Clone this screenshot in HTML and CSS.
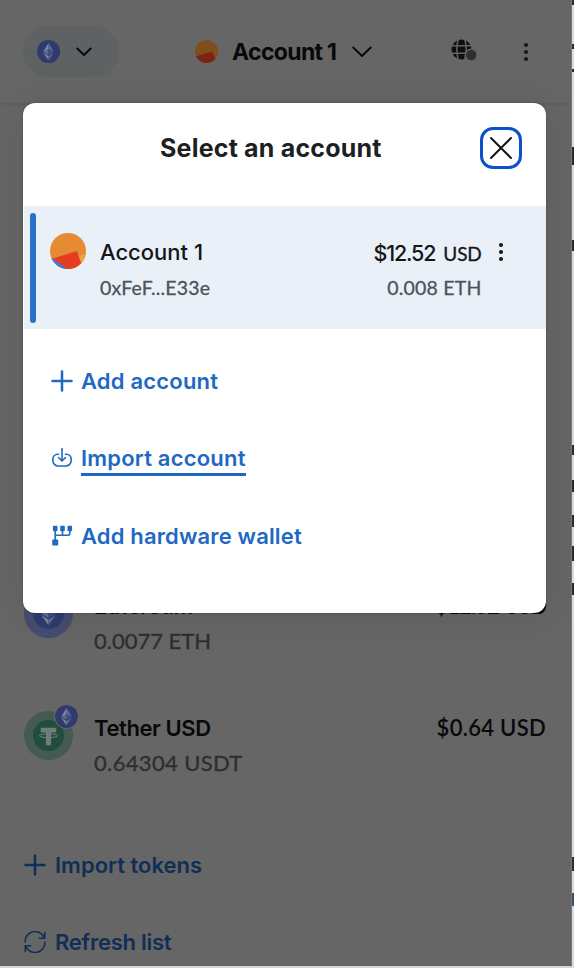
FILE: index.html
```
<!DOCTYPE html>
<html lang="en">
<head>
<meta charset="utf-8">
<title>Select an account</title>
<link rel="stylesheet" href="styles.css">
</head>
<body>
<svg class="defs" aria-hidden="true">
  <symbol id="eth" viewBox="0 0 32 32">
    <circle cx="16" cy="16" r="16" fill="#2f3b70"/>
    <path d="M16 4 8.6 16.3 16 13z" fill="#7c86a2"/>
    <path d="M16 4v9l7.4 3.3z" fill="#606b90"/>
    <path d="M8.6 16.3 16 20.7V13z" fill="#606b90"/>
    <path d="M23.4 16.3 16 20.7V13z" fill="#454f7a"/>
    <path d="M8.6 17.9 16 28v-5.8z" fill="#7c86a2"/>
    <path d="M23.4 17.9 16 28v-5.8z" fill="#606b90"/>
  </symbol>
</svg>
<div class="popup">
  <header class="topbar">
    <div class="network">
      <svg class="network-logo"><use href="#eth"/></svg>
      <svg class="network-arrow" viewBox="0 0 16 10"><path d="M1.3 1.5 8 8l6.700-6.500"/></svg>
    </div>
    <div class="current">
      <svg class="avatar-small" viewBox="0 0 36 36"><circle cx="18" cy="18" r="18" fill="#804d1e"/><path d="M1.500 25.300 27 18l4.500 11.800A18 18 0 0 1 1.500 25.300z" fill="#802213"/><path d="M1.500 25.300Q5 32 12 35z" fill="#1f467c"/></svg>
      <span class="current-name">Account 1</span>
      <svg class="current-arrow" viewBox="0 0 20 12"><path d="M1.300 1.500 10 10l8.700-8.500"/></svg>
    </div>
    <svg class="globe" viewBox="0 0 26 22">
      <circle cx="10.500" cy="10.500" r="10" fill="#0e0f11"/>
      <path d="M0 6.800h21M0 14.200h21M7.300 0Q4.300 10 7.300 21M13.700 0q3 10 0 21" fill="none" stroke="#646464" stroke-width="1.500"/>
      <circle cx="20.200" cy="16" r="6.600" fill="#646464"/><circle cx="20.200" cy="16" r="5.200" fill="#2d2f32"/>
    </svg>
    <svg class="dots" viewBox="0 0 6 20"><circle cx="3" cy="3" r="2"/><circle cx="3" cy="10" r="2"/><circle cx="3" cy="17" r="2"/></svg>
  </header>
  <main class="tokens">
    <div class="token">
      <div class="token-logo eth-ring"><svg class="token-mark"><use href="#eth"/></svg></div>
      <div class="token-main"><span class="token-name eth-name">Ethereum</span><span class="token-balance">0.0077 ETH</span></div>
      <span class="token-value eth-value">$12.52 USD</span>
    </div>
    <div class="token">
      <div class="token-logo usdt-ring">
        <svg class="token-mark" viewBox="0 0 32 32"><circle cx="16" cy="16" r="16" fill="#1f4f3c"/><path d="M8 8h16v5h-5.300v13h-5.400V13H8z" fill="#727c78"/><ellipse cx="16" cy="16.200" rx="9.500" ry="2" fill="none" stroke="#727c78" stroke-width="1"/></svg>
        <svg class="badge"><use href="#eth"/></svg>
      </div>
      <div class="token-main"><span class="token-name">Tether USD</span><span class="token-balance usdt-balance">0.64304 USDT</span></div>
      <span class="token-value">$0.64 USD</span>
    </div>
    <div class="page-link"><svg viewBox="0 0 22 22"><path class="heavy" d="M11 1.500v19M1.500 11h19"/></svg><span>Import tokens</span></div>
    <div class="page-link"><svg viewBox="0 0 22 22"><path d="M1.200 11A9.800 9.800 0 0 1 20 6.500M20.700 1.500v5.700h-5.400M20.800 11A9.800 9.800 0 0 1 2 15.500M1.300 20.500v-5.700h5.400"/></svg><span class="refresh">Refresh list</span></div>
  </main>
</div>
<aside class="behind"><span class="f1"></span><span class="f2"></span><span class="f3"></span><span class="f4"></span><span class="f5"></span><span class="f6"></span><span class="f7"></span><span class="f8"></span><span class="f9"></span><span class="f10"></span><span class="f11"></span><span class="f12"></span></aside>
<section class="modal">
  <header class="modal-head">
    <h1>Select an account</h1>
    <button class="close" aria-label="Close"><svg viewBox="0 0 24 24"><path d="m2 2 20 20M22 2 2 22"/></svg></button>
  </header>
  <div class="account">
    <i class="marker"></i>
    <svg class="avatar" viewBox="0 0 36 36"><defs><clipPath id="disc"><circle cx="18" cy="18" r="18"/></clipPath></defs><g clip-path="url(#disc)"><path fill="#e68a33" d="M0 0h36v36H0z"/><path d="m28.500 23.500 7.500-2.500v15h-8z" fill="#e9a73c"/><path d="M2 25.800 27 18l4.200 12.500L26 36H8z" fill="#e63c22"/><path d="M0 25.500h2.500L17 36H0z" fill="#2f80e5"/></g></svg>
    <div class="account-main"><span class="name">Account 1</span><span class="address">0xFeF...E33e</span></div>
    <div class="account-values"><span class="fiat">$12.52<small>USD</small></span><span class="crypto">0.008 ETH</span></div>
    <svg class="dots" viewBox="0 0 6 20"><circle cx="3" cy="3" r="2"/><circle cx="3" cy="10" r="2"/><circle cx="3" cy="17" r="2"/></svg>
  </div>
  <nav class="actions">
    <a><svg viewBox="0 0 22 22"><path class="heavy" d="M11 1.500v19M1.500 11h19"/></svg><span>Add account</span></a>
    <a><svg viewBox="0 0 22 22"><path d="M11 1.500v12.300M7.500 10.500l3.500 3.500 3.500-3.500M7.500 7.200H6.800A5 5 0 0 0 1.800 12v1.500a5.500 5.500 0 0 0 5.500 5.500h7.400a5.500 5.500 0 0 0 5.500-5.500V12a5 5 0 0 0-5-4.800h-.7"/></svg><span class="underlined">Import account</span></a>
    <a><svg viewBox="0 0 22 22"><path d="M4.200 4v13M4.200 10.300h12.600a2 2 0 0 0 2-2V4M11.500 4v6"/><path class="solid" d="M2.700 1.500h3v4h-3zM10 1.500h3v4h-3zM17.300 1.500h3v4h-3zM2 15.300h4.400v4.400H2z"/></svg><span class="hardware">Add hardware wallet</span></a>
  </nav>
</section>
</body>
</html>
```
FILE: styles.css
```
* { box-sizing: border-box; }
body {
  margin: 0;
  width: 574px;
  height: 968px;
  position: relative;
  overflow: hidden;
  background: #d3d4d6;
  font-family: Inter, "Liberation Sans", sans-serif;
  color: #141618;
}
.defs { position: absolute; width: 0; height: 0; }
svg { display: block; flex: none; }
span { white-space: nowrap; }

.popup {
  width: 572px;
  height: 966px;
  background: #666;
  border-right: 1px solid #777;
  overflow: hidden;
  color: #08090a;
}
.topbar {
  height: 103px;
  padding-left: 23px;
  display: flex;
  align-items: center;
  box-shadow: 0 0 5px rgba(0, 0, 0, .18);
}
.network {
  width: 96px;
  height: 51px;
  border-radius: 26px;
  background: #5f6263;
  padding-left: 14px;
  display: flex;
  align-items: center;
  gap: 16px;
}
.network-logo { width: 23px; height: 23px; }
.network-arrow { width: 16px; height: 10px; }
.network-arrow path, .current-arrow path { fill: none; stroke: #08090a; stroke-width: 1.900; stroke-linecap: round; stroke-linejoin: round; }
.current { display: flex; align-items: center; margin-left: 76px; width: 179px; }
.avatar-small { width: 23px; height: 23px; margin-right: 14px; }
.current-name { width: 120px; font-size: 23px; font-weight: 700; line-height: 30px; letter-spacing: -.65px; }
.current-arrow { width: 20px; height: 12px; }
.globe { width: 26px; height: 22px; margin-left: 77px; margin-top: -3px; }
.topbar .dots { margin-left: 46px; }
.dots { width: 6px; height: 20px; fill: #141618; }

.tokens { padding: 465px 25px 0 24px; }
.token { display: flex; height: 122px; }
.token-logo { position: relative; width: 49px; height: 49px; margin-top: 21px; border-radius: 50%; display: flex; align-items: center; justify-content: center; flex: none; }
.eth-ring { background: #454d70; }
.usdt-ring { background: #435b51; }
.token-mark { width: 31px; height: 31px; }
.badge { position: absolute; right: -6px; top: -7px; width: 25px; height: 25px; border: 1.500px solid #666; border-radius: 50%; background: #666; }
.token-main { display: flex; flex-direction: column; margin-left: 21px; padding-top: 21px; flex: 1; }
.token-name { font-size: 22px; line-height: 35px; font-weight: 600; letter-spacing: -.4px; }
.token-value { font: 600 22px/35px Lato, sans-serif; padding-top: 20px; letter-spacing: .3px; }
.eth-value { letter-spacing: -.9px; }
.token-balance { font: 400 22px/35px Lato, sans-serif; margin-top: -1px; color: #2c2e31; -webkit-text-stroke: .3px; }
.usdt-balance { letter-spacing: .35px; }
.page-link { height: 77px; display: flex; align-items: center; gap: 9px; color: #112f55; font-size: 22px; font-weight: 600; letter-spacing: 0; }
.page-link svg, .actions svg { width: 22px; height: 22px; fill: none; stroke: currentColor; stroke-width: 1.600; stroke-linecap: round; stroke-linejoin: round; }
.page-link .heavy, .actions .heavy { stroke-width: 2.500; }
.solid { fill: currentColor; }
.token + .page-link { margin-top: 14px; }
.page-link .refresh { letter-spacing: -.25px; }

.behind { position: absolute; left: 572px; top: 0; width: 2px; height: 968px; background: #d9dce0; display: flex; flex-direction: column; }
.behind span { background: #2a2c30; width: 2px; }
.f1 { height: 5px; }
.f2 { height: 5px; margin-top: 39px; }
.f3 { height: 3px; margin-top: 20px; }
.f4 { height: 18px; margin-top: 75px; }
.f5 { height: 11px; margin-top: 75px; }
.f6 { height: 10px; margin-top: 194px; }
.f7 { height: 12px; margin-top: 25px; }
.f8 { height: 12px; margin-top: 23px; }
.f9 { height: 15px; margin-top: 19px; }
.f10 { height: 12px; margin-top: 22px; }
.f11 { height: 14px; margin-top: 262px; }
.behind .f12 { height: 13px; margin-top: 22px; background: #3e506c; }

.modal {
  position: absolute;
  left: 22.500px;
  top: 103px;
  width: 523.500px;
  height: 510px;
  border-radius: 12px;
  background: #fff;
  box-shadow: 0 0 2px rgba(0, 0, 0, .3), 0 2px 40px rgba(0, 0, 0, .1);
}
.modal-head { height: 103px; display: flex; padding-left: 137.500px; }
h1 { margin: 28px 0 0; width: 320px; font-size: 25px; line-height: 34px; font-weight: 700; letter-spacing: .2px; color: #1c1f23; }
.close { width: 42px; height: 42px; margin-top: 24px; border: 3px solid #0b52c8; border-radius: 13px; padding: 0; background: #fff; display: flex; align-items: center; justify-content: center; }
.close svg { width: 24px; height: 24px; fill: none; stroke: #141618; stroke-width: 2; stroke-linecap: round; }
.account { height: 123px; margin-left: 1px; width: 522px; background: #eaf0f8; display: flex; align-items: flex-start; }
.marker { width: 6px; height: 110px; margin: 6.500px 0 0 6px; border-radius: 3px; background: #2870c8; }
.avatar { width: 36px; height: 36px; margin: 27px 0 0 14.500px; }
.account-main { display: flex; flex-direction: column; margin: 28px 0 0 14px; width: 180px; }
.name { font-size: 22px; font-weight: 500; line-height: 36px; }
.address { font: 400 19.500px/36px Lato, sans-serif; letter-spacing: .15px; color: #4d535b; -webkit-text-stroke: .3px; }
.account-values { display: flex; flex-direction: column; align-items: flex-end; width: 201.500px; margin-top: 29px; }
.fiat { font-size: 21.500px; line-height: 36px; letter-spacing: -1.150px; font-weight: 500; }
.fiat small { font: 400 19px Lato, sans-serif; letter-spacing: -.2px; margin-left: 8px; -webkit-text-stroke: .3px; }
.crypto { font: 400 19.500px/33px Lato, sans-serif; letter-spacing: .2px; color: #4d535b; -webkit-text-stroke: .3px; }
.account .dots { margin: 36px 0 0 16px; }
.actions { padding: 13px 0 0 28px; color: #1f69c2; }
.actions a { height: 77.500px; display: flex; align-items: center; gap: 8.500px; font-size: 22px; font-weight: 600; letter-spacing: .2px; }
.underlined { border-bottom: 3px solid; line-height: 30px; margin-top: 3px; }
.hardware { letter-spacing: .15px; }
```
